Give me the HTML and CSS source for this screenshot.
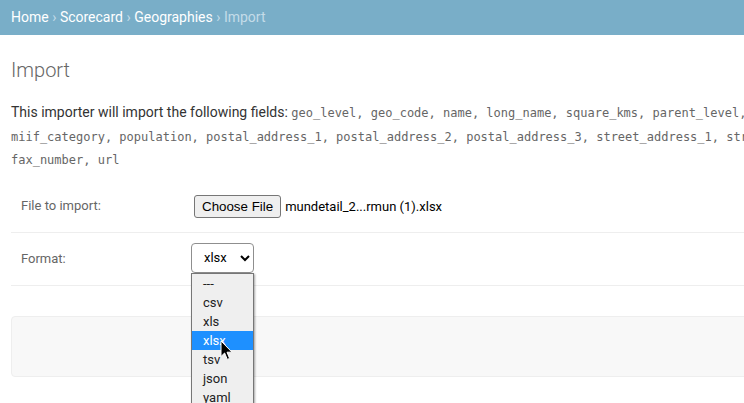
FILE: index.html
```html
<!DOCTYPE html>
<html lang="en">
<head>
<meta charset="utf-8">
<title>Import | Django site admin</title>
<link rel="stylesheet" href="styles.css">
</head>
<body>
<div class="breadcrumbs">
  <a href="#">Home</a> <span class="sep">›</span> <a href="#">Scorecard</a> <span class="sep">›</span> <a href="#">Geographies</a> <span class="sep">›</span> Import
</div>
<div class="content">
  <h1>Import</h1>
  <p class="intro">This importer will import the following fields: <code>geo_level, geo_code, name, long_name, square_kms, parent_level, parent_code, category, miif_category, population, postal_address_1, postal_address_2, postal_address_3, street_address_1, street_address_2, street_address_3, fax_number, url</code></p>
  <form class="import-form">
    <fieldset class="module">
      <div class="form-row">
        <label class="row-label">File to import:</label>
        <div class="file-input">
          <span class="file-btn">Choose File</span>
          <span class="file-name">mundetail_2...rmun (1).xlsx</span>
        </div>
      </div>
      <div class="form-row">
        <label class="row-label">Format:</label>
        <div class="select-wrap">
          <select class="format-select">
            <option>---</option>
            <option>csv</option>
            <option>xls</option>
            <option selected>xlsx</option>
            <option>tsv</option>
            <option>json</option>
            <option>yaml</option>
          </select>
          <ul class="dropdown">
            <li>---</li>
            <li>csv</li>
            <li>xls</li>
            <li class="active">xlsx</li>
            <li>tsv</li>
            <li>json</li>
            <li>yaml</li>
          </ul>
          <svg class="cursor" width="13" height="21" viewBox="0 0 13 21" aria-hidden="true">
            <path d="M1 1 L1 16.5 L4.6 13 L7.3 19.4 L9.6 18.4 L7 12.2 L12 12.2 Z" fill="#000" stroke="#fff" stroke-width="1" stroke-linejoin="round"/>
          </svg>
        </div>
      </div>
    </fieldset>
    <div class="submit-row">
      <button type="button" class="submit-btn">Submit</button>
    </div>
  </form>
</div>
</body>
</html>
```

FILE: styles.css
```css
html, body {
  margin: 0;
  padding: 0;
}

body {
  font-family: Roboto, "Liberation Sans", sans-serif;
  font-size: 14px;
  color: #333;
  background: #fff;
  overflow: hidden;
  width: 744px;
  height: 403px;
}

.breadcrumbs {
  background: #79aec8;
  color: #c4dce8;
  font-size: 14px;
  line-height: 16px;
  height: 16px;
  padding: 9px 11px 10px;
  white-space: nowrap;
  width: 1000px;
}

.breadcrumbs a {
  color: #fff;
  text-decoration: none;
}

.breadcrumbs .sep {
  color: #c4dce8;
}

.content {
  width: 989px;
  padding: 23px 11px 0;
}

h1 {
  margin: 0 0 19px;
  font-size: 20px;
  line-height: 24px;
  font-weight: 300;
  color: #666;
}

.intro {
  margin: 0 0 8px;
  line-height: 22.5px;
}

.intro code {
  font-family: "DejaVu Sans Mono", "Liberation Mono", monospace;
  font-size: 12px;
  color: #666;
}

.import-form {
  margin: 0;
}

.module {
  border: 0;
  margin: 0 0 30px;
  padding: 0;
  min-width: 0;
}

.form-row {
  display: flex;
  align-items: center;
  padding: 11px 10px 11px;
  border-bottom: 1px solid #eee;
  height: 30px;
}

.row-label {
  width: 170px;
  flex: none;
  font-size: 13px;
  color: #666;
}

.file-input {
  display: flex;
  align-items: center;
  padding-left: 3px;
  margin-top: 1px;
}

.file-btn {
  font-family: "Liberation Sans", Arial, sans-serif;
  font-size: 13.33px;
  line-height: 15px;
  color: #000;
  background: #efefef;
  border: 1px solid #767676;
  border-radius: 3px;
  padding: 3px 7px 3px 7px;
}

.file-name {
  font-family: Roboto, "Liberation Sans", sans-serif;
  font-size: 13px;
  color: #000;
  margin-left: 4px;
}

.select-wrap {
  position: relative;
  margin-top: -2px;
}

.format-select {
  display: block;
  width: 63px;
  height: 30px;
  margin: 0;
  padding: 0 3px 0 8px;
  font-family: Roboto, "Liberation Sans", sans-serif;
  font-size: 13px;
  color: #000;
  background: #fff;
  border: 1px solid #8f8f8f;
  border-radius: 4px;
}

.dropdown {
  position: absolute;
  top: 30px;
  left: 0;
  z-index: 5;
  width: 61px;
  margin: 0;
  padding: 0;
  list-style: none;
  background: #efefef;
  border: 1px solid #767676;
  box-shadow: 1px 1px 2px rgba(0, 0, 0, 0.35);
  height: 140px;
  overflow: hidden;
}

.dropdown li {
  height: 19px;
  line-height: 19px;
  padding-left: 11px;
  font-size: 13px;
  color: #222;
  white-space: nowrap;
}

.dropdown li.active {
  background: #1e90ff;
  color: #fff;
}

.cursor {
  position: absolute;
  left: 29px;
  top: 97px;
  z-index: 6;
}

.submit-row {
  display: flex;
  justify-content: flex-end;
  padding: 12px 14px;
  background: #f8f8f8;
  border: 1px solid #eee;
  border-radius: 4px;
  height: 35px;
}

.submit-btn {
  background: #417690;
  color: #fff;
  border: 0;
  border-radius: 4px;
  padding: 10px 15px;
  font-family: Roboto, sans-serif;
  font-size: 13px;
}
```
